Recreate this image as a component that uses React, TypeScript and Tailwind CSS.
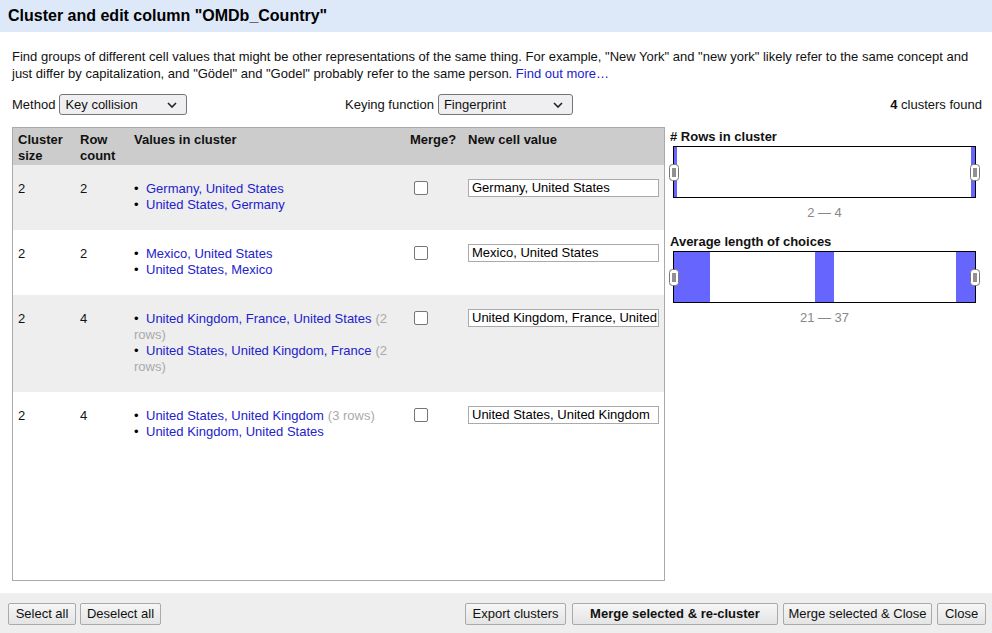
import React from "react";

type Choice = { value: string; rows?: number };
type Cluster = { size: number; count: number; choices: Choice[]; newValue: string };

const clusters: Cluster[] = [
  {
    size: 2,
    count: 2,
    choices: [{ value: "Germany, United States" }, { value: "United States, Germany" }],
    newValue: "Germany, United States",
  },
  {
    size: 2,
    count: 2,
    choices: [{ value: "Mexico, United States" }, { value: "United States, Mexico" }],
    newValue: "Mexico, United States",
  },
  {
    size: 2,
    count: 4,
    choices: [
      { value: "United Kingdom, France, United States", rows: 2 },
      { value: "United States, United Kingdom, France", rows: 2 },
    ],
    newValue: "United Kingdom, France, United States",
  },
  {
    size: 2,
    count: 4,
    choices: [
      { value: "United States, United Kingdom", rows: 3 },
      { value: "United Kingdom, United States" },
    ],
    newValue: "United States, United Kingdom",
  },
];

const Chevron = () => (
  <svg width="10" height="6" viewBox="0 0 10 6" className="shrink-0">
    <path d="M1 1 L5 5 L9 1" fill="none" stroke="#222" strokeWidth="1.6" />
  </svg>
);

const FakeSelect = ({ value, width }: { value: string; width: string }) => (
  <div
    className={`${width} h-[21px] flex items-center justify-between pl-[5px] pr-[9px] border border-[#767676] rounded-[3px] bg-[#efeff2]`}
  >
    <span>{value}</span>
    <Chevron />
  </div>
);

const Handle = ({ side }: { side: "left" | "right" }) => (
  <svg
    width="10"
    height="17"
    viewBox="0 0 10 17"
    className={`absolute top-[17px] ${side === "left" ? "left-[-5px]" : "right-[-5px]"}`}
  >
    <rect x="0.5" y="0.5" width="9" height="16" rx="3" fill="#fff" stroke="#777" />
    <line x1="4" y1="4" x2="4" y2="13" stroke="#222" />
    <line x1="6" y1="4" x2="6" y2="13" stroke="#222" />
  </svg>
);

const Histogram = ({ bars }: { bars: [number, number][] }) => (
  <div className="relative ml-[3px] w-[303px] h-[52px] border border-black bg-white">
    <svg width="301" height="50" className="block">
      {bars.map(([x, w], i) => (
        <rect key={i} x={x} y="0" width={w} height="50" fill="#6666ff" />
      ))}
    </svg>
    <Handle side="left" />
    <Handle side="right" />
  </div>
);

const Button = ({ children, bold, width }: { children: React.ReactNode; bold?: boolean; width: string }) => (
  <button
    className={`${width} h-[22px] border border-[#aaa] rounded-[2px] bg-gradient-to-b from-[#f6f6f6] to-[#e4e4e4] text-[13px] text-[#111] whitespace-nowrap ${
      bold ? "font-bold" : ""
    }`}
  >
    {children}
  </button>
);

export default function App() {
  return (
    <div className="w-[992px] h-[633px] flex flex-col bg-white text-[13px] leading-[16px] text-[#111] font-['Liberation_Sans',Arial,sans-serif]">
      <div className="h-[32px] shrink-0 bg-[#dde8f9] flex items-center pl-[8px]">
        <h1 className="text-[16px] font-bold text-black">Cluster and edit column "OMDb_Country"</h1>
      </div>

      <p className="mx-[12px] mt-[16px] leading-[17px]">
        Find groups of different cell values that might be other representations of the same thing. For example,
        "New York" and "new york" likely refer to the same concept and just differ by capitalization, and "Gödel"
        and "Godel" probably refer to the same person.{" "}
        <a className="text-[#2222cc]">Find out more…</a>
      </p>

      <div className="mt-[12px] mx-[12px] flex items-center h-[21px]">
        <div className="w-[333px] flex items-center gap-[4px]">
          <span>Method</span>
          <FakeSelect value="Key collision" width="w-[128px]" />
        </div>
        <div className="flex items-center gap-[4px]">
          <span>Keying function</span>
          <FakeSelect value="Fingerprint" width="w-[135px]" />
        </div>
        <div className="ml-auto mr-[-2px]">
          <b>4</b> clusters found
        </div>
      </div>

      <div className="mt-[12px] flex flex-1 min-h-0">
        <div className="ml-[12px] w-[653px] h-[454px] border border-[#aaa] overflow-hidden">
          <table className="w-[651px] table-fixed border-collapse">
            <colgroup>
              <col className="w-[62px]" />
              <col className="w-[54px]" />
              <col className="w-[276px]" />
              <col className="w-[58px]" />
              <col className="w-[201px]" />
            </colgroup>
            <thead>
              <tr className="bg-[#cccccc] text-left align-top font-bold">
                <th className="pl-[5px] pt-[4px] pb-[1px]">
                  Cluster
                  <br />
                  size
                </th>
                <th className="pl-[5px] pt-[4px] pb-[1px]">
                  Row
                  <br />
                  count
                </th>
                <th className="pl-[5px] pt-[4px] pb-[1px]">Values in cluster</th>
                <th className="pl-[5px] pt-[4px] pb-[1px]">Merge?</th>
                <th className="pl-[5px] pt-[4px] pb-[1px]">New cell value</th>
              </tr>
            </thead>
            <tbody>
              {clusters.map((c, i) => (
                <tr key={i} className={`align-top ${i % 2 === 0 ? "bg-[#eeeeee]" : "bg-white"}`}>
                  <td className="pl-[5px] pt-[16px] pb-[17px]">{c.size}</td>
                  <td className="pl-[5px] pt-[16px] pb-[17px]">{c.count}</td>
                  <td className="pl-[5px] pr-[5px] pt-[16px] pb-[17px]">
                    <ul>
                      {c.choices.map((ch, j) => (
                        <li key={j}>
                          <span className="inline-block w-[12px] text-[13px] text-black">•</span>
                          <a className="text-[#2222cc]">{ch.value}</a>
                          {ch.rows ? <span className="ml-[4px] text-[#aaaaaa]">({ch.rows} rows)</span> : null}
                        </li>
                      ))}
                    </ul>
                  </td>
                  <td className="pl-[9px] pt-[16px]">
                    <div className="w-[14px] h-[14px] border border-[#767676] rounded-[2px] bg-white" />
                  </td>
                  <td className="pl-[5px] pt-[14px] pr-[5px]">
                    <div className="w-[191px] h-[18px] border border-[#aaa] bg-white pl-[3px] leading-[16px] overflow-hidden whitespace-nowrap text-black">
                      {c.newValue}
                    </div>
                  </td>
                </tr>
              ))}
            </tbody>
          </table>
        </div>

        <div className="ml-[5px] w-[312px] pt-[2px] flex flex-col">
          <div className="font-bold">
            # Rows in cluster
          </div>
          <div className="mt-[1px]">
            <Histogram bars={[[0, 3], [297, 4]]} />
          </div>
          <div className="mt-[7px] text-center text-[#888] pl-[3px] w-[306px]">2 — 4</div>
          <div className="mt-[13px] font-bold">Average length of choices</div>
          <div className="mt-[1px]">
            <Histogram bars={[[0, 36], [141, 19], [282, 19]]} />
          </div>
          <div className="mt-[7px] text-center text-[#888] pl-[3px] w-[306px]">21 — 37</div>
        </div>
      </div>

      <div className="mt-[12px] h-[40px] shrink-0 bg-[#eeeeee] flex items-center pt-[2px] pl-[8px] pr-[6px]">
        <Button width="w-[68px]">Select all</Button>
        <div className="ml-[4px]">
          <Button width="w-[81px]">Deselect all</Button>
        </div>
        <div className="ml-auto flex">
          <Button width="w-[101px]">Export clusters</Button>
          <div className="ml-[6px]">
            <Button bold width="w-[206px]">
              Merge selected &amp; re-cluster
            </Button>
          </div>
          <div className="ml-[5px]">
            <Button width="w-[149px]">Merge selected &amp; Close</Button>
          </div>
          <div className="ml-[5px]">
            <Button width="w-[49px]">Close</Button>
          </div>
        </div>
      </div>
    </div>
  );
}
